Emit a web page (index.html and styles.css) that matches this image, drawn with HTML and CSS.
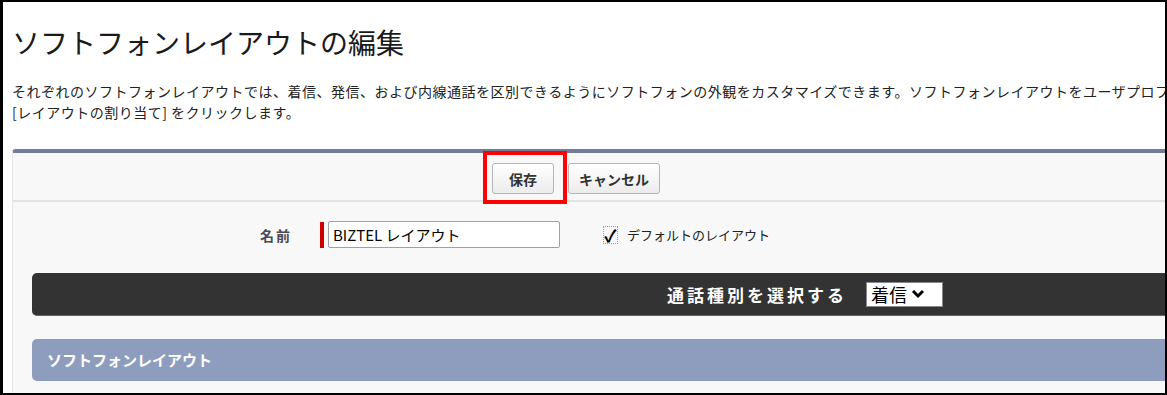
FILE: index.html
```html
<!DOCTYPE html>
<html lang="ja">
<head>
  <meta charset="UTF-8">
  <meta name="viewport" content="width=device-width, initial-scale=1.0">
  <title>ソフトフォンレイアウトの編集</title>
  <link rel="stylesheet" href="styles.css">
</head>
<body>
  <div class="frame">
    <div class="page">
      <h1 class="title">ソフトフォンレイアウトの編集</h1>
      <p class="intro">
        それぞれのソフトフォンレイアウトでは、着信、発信、および内線通話を区別できるようにソフトフォンの外観をカスタマイズできます。ソフトフォンレイアウトをユーザプロファイルに割り当てるには、<br>
        [レイアウトの割り当て] をクリックします。
      </p>

      <div class="panel">
        <div class="buttons">
          <span class="highlight">
            <button class="btn btn-save">保存</button>
          </span>
          <button class="btn btn-cancel">キャンセル</button>
        </div>

        <div class="name-row">
          <label class="name-label" for="name">名前</label>
          <span class="required"></span>
          <input class="name-input" id="name" type="text" value="BIZTEL レイアウト">
          <span class="check">✓</span>
          <span class="check-label">デフォルトのレイアウト</span>
        </div>

        <div class="type-bar">
          <span class="type-label">通話種別を選択する</span>
          <span class="type-select">
            着信
            <svg width="14" height="10" viewBox="0 0 14 10">
              <path d="M2 2 L7 7 L12 2" fill="none" stroke="#000" stroke-width="3"/>
            </svg>
          </span>
        </div>

        <div class="section-bar">ソフトフォンレイアウト</div>
      </div>
    </div>
  </div>
</body>
</html>
```

FILE: styles.css
```css
body {
  margin: 0;
  font-family: "Noto Sans CJK JP", "Noto Sans", sans-serif;
  background: #fff;
  color: #222;
}

.frame {
  width: 1167px;
  height: 395px;
  box-sizing: border-box;
  border: solid #000;
  border-width: 2px 2px 2px 3px;
  overflow: hidden;
}

.page {
  width: 1400px;
  padding-left: 9px;
}

.title {
  margin: 22px 0 0;
  font-size: 28px;
  font-weight: normal;
  line-height: 36px;
  color: #1a1a1a;
}

.intro {
  margin: 21px 0 0;
  font-size: 14px;
  letter-spacing: 0.5px;
  line-height: 21px;
  white-space: nowrap;
}

.panel {
  margin-top: 26px;
  height: 300px;
  background: #f8f8f8;
  border-top: 4px solid #707c98;
  border-left: 1px solid #e6e6e6;
  border-radius: 4px 0 0 0;
}

.buttons {
  display: flex;
  gap: 14px;
  padding: 10px 0 6px 479px;
  border-bottom: 2px solid #e2e2e2;
}

.btn {
  height: 31px;
  font-family: inherit;
  font-size: 14px;
  font-weight: bold;
  color: #333;
  border: 1px solid #b5b5b5;
  border-radius: 3px;
  background: linear-gradient(#fff, #ececec);
}

.btn-save {
  padding: 0 16px;
}

.btn-cancel {
  padding: 0 10px;
}

.highlight {
  position: relative;
  display: flex;
}

.highlight::after {
  content: "";
  position: absolute;
  left: -9px;
  right: -13px;
  top: -12px;
  bottom: -10px;
  border: 4px solid #f00;
}

.name-row {
  display: flex;
  align-items: center;
  padding-top: 19px;
}

.name-label {
  width: 279px;
  text-align: right;
  font-size: 14px;
  font-weight: bold;
  letter-spacing: 2px;
  color: #4a4a56;
  margin-right: 28px;
}

.required {
  width: 4px;
  height: 26px;
  background: #c00;
  margin-right: 4px;
}

.name-input {
  width: 232px;
  height: 27px;
  box-sizing: border-box;
  padding: 0 4px;
  border: 1px solid #a0a0a0;
  border-radius: 2px;
  font-family: inherit;
  font-size: 15px;
  color: #000;
}

.check {
  margin-left: 43px;
  width: 15px;
  height: 18px;
  box-sizing: border-box;
  border: 1px dotted #999;
  font-size: 17px;
  font-weight: bold;
  line-height: 16px;
  text-align: center;
  color: #000;
}

.check-label {
  margin-left: 9px;
  font-size: 13px;
}

.type-bar {
  display: flex;
  align-items: center;
  margin: 25px 0 0 19px;
  height: 43px;
  padding-left: 635px;
  background: #333;
  border-radius: 5px;
  border-bottom: 1px solid #666;
  box-sizing: border-box;
  color: #fff;
}

.type-label {
  font-size: 17px;
  font-weight: bold;
  letter-spacing: 3px;
}

.type-select {
  display: flex;
  align-items: center;
  gap: 4px;
  margin-left: 19px;
  width: 77px;
  height: 25px;
  box-sizing: border-box;
  padding: 0 4px;
  background: #fff;
  border: 1px solid #888;
  font-size: 18px;
  line-height: 1;
  color: #000;
}

.section-bar {
  margin: 23px 0 0 19px;
  height: 42px;
  padding-left: 15px;
  line-height: 42px;
  background: #8e9dbe;
  border-radius: 5px;
  font-size: 15px;
  font-weight: bold;
  color: #fff;
}
```
